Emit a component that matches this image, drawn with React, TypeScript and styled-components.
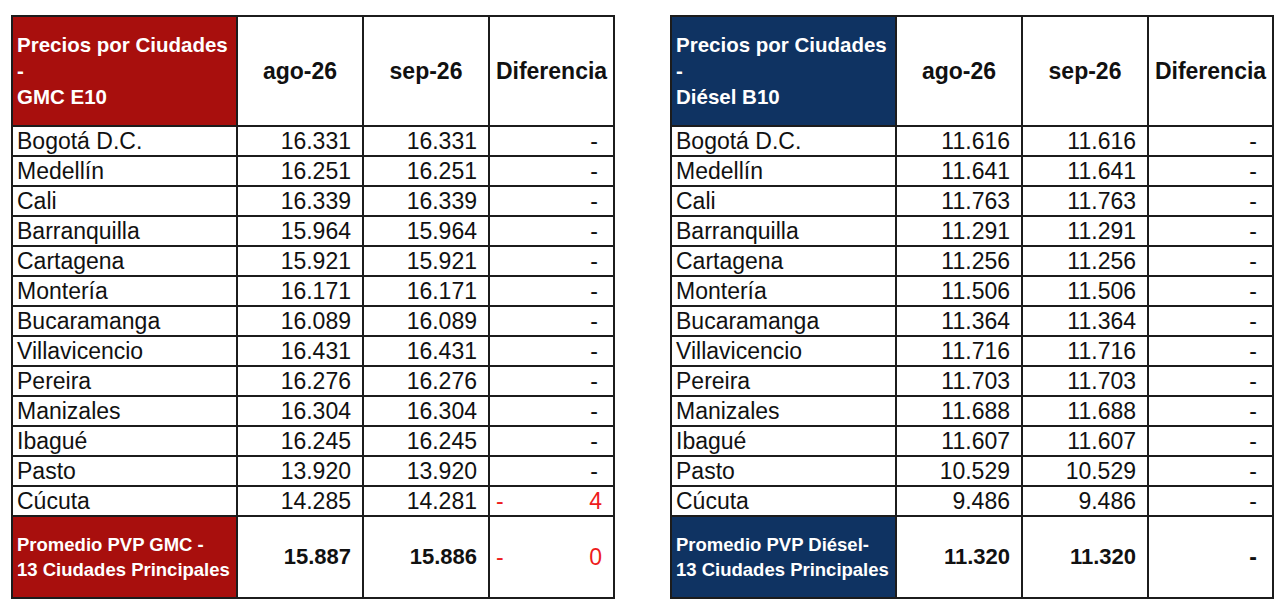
import * as React from 'react';
import styled, { createGlobalStyle } from 'styled-components';

const GlobalStyle = createGlobalStyle`
  html, body {
    margin: 0;
    padding: 0;
    background: #ffffff;
  }
  body {
    font-family: "Liberation Sans", Arial, sans-serif;
    color: #111111;
  }
`;

const colors = {
  gasoline: '#a80f0d',
  diesel: '#0f3362',
  line: '#1c1c1c',
  negative: '#ee1c1c'
};

const Page = styled.div`
  display: flex;
  align-items: flex-start;
  gap: 55px;
  padding: 15px 0 0 11px;
  width: 1280px;
  height: 605px;
  box-sizing: border-box;
  overflow: hidden;
`;

const Table = styled.table`
  border-collapse: collapse;
  table-layout: fixed;
  width: 602px;
  border: 2px solid ${colors.line};
`;

const HeadRow = styled.tr`
  height: 110px;
`;

const BodyRow = styled.tr`
  height: 30px;
`;

const FootRow = styled.tr`
  height: 82px;
`;

const TitleCell = styled.th<{ $bg: string }>`
  background: ${props => props.$bg};
  color: #ffffff;
  font-size: 20.5px;
  font-weight: bold;
  line-height: 26px;
  text-align: left;
  padding: 0 4px;
  border: 2px solid ${colors.line};
`;

const MonthCell = styled.th`
  font-size: 23px;
  font-weight: bold;
  text-align: center;
  padding: 0;
  border: 2px solid ${colors.line};
`;

const CityCell = styled.td`
  font-size: 23px;
  line-height: 24px;
  padding: 0 4px;
  white-space: nowrap;
  border: 2px solid ${colors.line};
`;

const NumberCell = styled.td<{ $bold?: boolean }>`
  font-size: ${props => (props.$bold ? '22px' : '23px')};
  font-weight: ${props => (props.$bold ? 'bold' : 'normal')};
  line-height: 24px;
  text-align: right;
  padding: 0 11px 0 0;
  border: 2px solid ${colors.line};
`;

const DiffCell = styled.td<{ $negative?: boolean; $bold?: boolean }>`
  font-size: 23px;
  font-weight: ${props => (props.$bold ? 'bold' : 'normal')};
  line-height: 24px;
  padding: 0 11px 0 6px;
  color: ${props => (props.$negative ? colors.negative : '#111111')};
  border: 2px solid ${colors.line};
`;

const DiffInner = styled.div`
  display: flex;
  justify-content: space-between;
  align-items: center;
`;

const ZeroDash = styled.span`
  margin-left: auto;
  margin-right: 4px;
`;

const FootLabel = styled.td<{ $bg: string }>`
  background: ${props => props.$bg};
  color: #ffffff;
  font-size: 18.5px;
  font-weight: bold;
  line-height: 25px;
  padding: 0 4px;
  white-space: nowrap;
  border: 2px solid ${colors.line};
`;

type Row = { city: string; ago: string; sep: string; diff?: string };

type PriceTableProps = {
  fuel: string;
  color: string;
  rows: Row[];
  footLabel: [string, string];
  avgAgo: string;
  avgSep: string;
  avgDiff?: string;
};

const Difference = ({ value, bold }: { value?: string; bold?: boolean }) =>
  value ? (
    <DiffCell $negative $bold={bold}>
      <DiffInner>
        <span>-</span>
        <span>{value}</span>
      </DiffInner>
    </DiffCell>
  ) : (
    <DiffCell $bold={bold}>
      <DiffInner>
        <ZeroDash>-</ZeroDash>
      </DiffInner>
    </DiffCell>
  );

const PriceTable = (props: PriceTableProps) => (
  <Table>
    <colgroup>
      <col style={{ width: 225 }} />
      <col style={{ width: 126 }} />
      <col style={{ width: 126 }} />
      <col style={{ width: 125 }} />
    </colgroup>
    <thead>
      <HeadRow>
        <TitleCell $bg={props.color}>
          Precios por Ciudades
          <br />-<br />
          {props.fuel}
        </TitleCell>
        <MonthCell>ago-26</MonthCell>
        <MonthCell>sep-26</MonthCell>
        <MonthCell>Diferencia</MonthCell>
      </HeadRow>
    </thead>
    <tbody>
      {props.rows.map(row => (
        <BodyRow key={row.city}>
          <CityCell>{row.city}</CityCell>
          <NumberCell>{row.ago}</NumberCell>
          <NumberCell>{row.sep}</NumberCell>
          <Difference value={row.diff} />
        </BodyRow>
      ))}
      <FootRow>
        <FootLabel $bg={props.color}>
          {props.footLabel[0]}
          <br />
          {props.footLabel[1]}
        </FootLabel>
        <NumberCell $bold>{props.avgAgo}</NumberCell>
        <NumberCell $bold>{props.avgSep}</NumberCell>
        <Difference value={props.avgDiff} bold={!props.avgDiff} />
      </FootRow>
    </tbody>
  </Table>
);

const gasolineRows: Row[] = [
  { city: 'Bogotá D.C.', ago: '16.331', sep: '16.331' },
  { city: 'Medellín', ago: '16.251', sep: '16.251' },
  { city: 'Cali', ago: '16.339', sep: '16.339' },
  { city: 'Barranquilla', ago: '15.964', sep: '15.964' },
  { city: 'Cartagena', ago: '15.921', sep: '15.921' },
  { city: 'Montería', ago: '16.171', sep: '16.171' },
  { city: 'Bucaramanga', ago: '16.089', sep: '16.089' },
  { city: 'Villavicencio', ago: '16.431', sep: '16.431' },
  { city: 'Pereira', ago: '16.276', sep: '16.276' },
  { city: 'Manizales', ago: '16.304', sep: '16.304' },
  { city: 'Ibagué', ago: '16.245', sep: '16.245' },
  { city: 'Pasto', ago: '13.920', sep: '13.920' },
  { city: 'Cúcuta', ago: '14.285', sep: '14.281', diff: '4' }
];

const dieselRows: Row[] = [
  { city: 'Bogotá D.C.', ago: '11.616', sep: '11.616' },
  { city: 'Medellín', ago: '11.641', sep: '11.641' },
  { city: 'Cali', ago: '11.763', sep: '11.763' },
  { city: 'Barranquilla', ago: '11.291', sep: '11.291' },
  { city: 'Cartagena', ago: '11.256', sep: '11.256' },
  { city: 'Montería', ago: '11.506', sep: '11.506' },
  { city: 'Bucaramanga', ago: '11.364', sep: '11.364' },
  { city: 'Villavicencio', ago: '11.716', sep: '11.716' },
  { city: 'Pereira', ago: '11.703', sep: '11.703' },
  { city: 'Manizales', ago: '11.688', sep: '11.688' },
  { city: 'Ibagué', ago: '11.607', sep: '11.607' },
  { city: 'Pasto', ago: '10.529', sep: '10.529' },
  { city: 'Cúcuta', ago: '9.486', sep: '9.486' }
];

const App = () => (
  <>
    <GlobalStyle />
    <Page>
      <PriceTable
        fuel="GMC E10"
        color={colors.gasoline}
        rows={gasolineRows}
        footLabel={['Promedio PVP GMC -', '13 Ciudades Principales']}
        avgAgo="15.887"
        avgSep="15.886"
        avgDiff="0"
      />
      <PriceTable
        fuel="Diésel B10"
        color={colors.diesel}
        rows={dieselRows}
        footLabel={['Promedio PVP Diésel-', '13 Ciudades Principales']}
        avgAgo="11.320"
        avgSep="11.320"
      />
    </Page>
  </>
);

export default App;
